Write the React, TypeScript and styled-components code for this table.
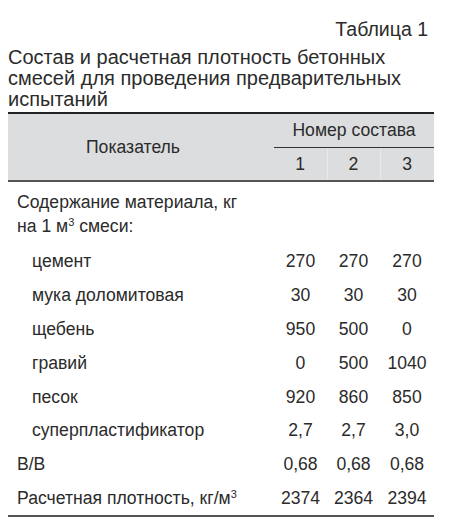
import React from 'react';
import styled, {createGlobalStyle} from 'styled-components';

const GlobalStyle = createGlobalStyle`
  body {
    margin: 0;
    background: #ffffff;
    font-family: "Liberation Sans", Arial, sans-serif;
    color: #2b2b2b;
  }
`;

const Sup = styled.sup`
  font-size: 11px;
  line-height: 0;
  vertical-align: 6px;
`;

type Row = {
    label: React.ReactNode;
    values: string[];
    indent?: boolean;
};

const rows: Row[] = [
    {label: 'цемент', values: ['270', '270', '270'], indent: true},
    {label: 'мука доломитовая', values: ['30', '30', '30'], indent: true},
    {label: 'щебень', values: ['950', '500', '0'], indent: true},
    {label: 'гравий', values: ['0', '500', '1040'], indent: true},
    {label: 'песок', values: ['920', '860', '850'], indent: true},
    {label: 'суперпластификатор', values: ['2,7', '2,7', '3,0'], indent: true},
    {label: 'В/В', values: ['0,68', '0,68', '0,68']},
    {label: <>Расчетная плотность, кг/м<Sup>3</Sup></>, values: ['2374', '2364', '2394']},
];

export default function App() {
    return (
        <>
            <GlobalStyle/>
            <Page>
                <Caption>Таблица 1</Caption>
                <Title>Состав и расчетная плотность бетонных смесей для проведения предварительных испытаний</Title>
                <Table>
                    <colgroup>
                        <col style={{width: 266}}/>
                        <col style={{width: 53}}/>
                        <col style={{width: 53}}/>
                        <col style={{width: 54}}/>
                    </colgroup>
                    <thead>
                    <tr>
                        <HeadCell rowSpan={2}>Показатель</HeadCell>
                        <GroupCell colSpan={3}>Номер состава</GroupCell>
                    </tr>
                    <tr>
                        <NumHead>1</NumHead>
                        <NumHead $sep>2</NumHead>
                        <NumHead $sep>3</NumHead>
                    </tr>
                    </thead>
                    <tbody>
                    <tr>
                        <GroupLabel colSpan={4}>
                            Содержание материала, кг<br/>на 1 м<Sup>3</Sup> смеси:
                        </GroupLabel>
                    </tr>
                    {rows.map((r, i) => (
                        <tr key={i}>
                            <Label $indent={r.indent}>{r.label}</Label>
                            {r.values.map((v, j) => <Value key={j}>{v}</Value>)}
                        </tr>
                    ))}
                    </tbody>
                </Table>
            </Page>
        </>
    );
}

const Page = styled.div`
  width: 426px;
  padding: 17px 0 0 8px;
`;

const Caption = styled.div`
  text-align: right;
  font-size: 19.5px;
  line-height: 24px;
  padding-right: 6px;
  margin-bottom: 6px;
`;

const Title = styled.div`
  font-size: 20px;
  line-height: 21px;
  padding-right: 30px;
  margin-bottom: 2px;
`;

const Table = styled.table`
  width: 426px;
  border-collapse: collapse;
  table-layout: fixed;
  font-size: 17.6px;
  border-top: 2px solid #222;
  border-bottom: 2px solid #555;

  td, th {
    padding: 0;
    font-weight: normal;
  }
`;

const HeadCell = styled.th`
  background: #dcdddf;
  text-align: center;
  vertical-align: middle;
  border-bottom: 2px solid #555;
  padding-right: 16px !important;
`;

const GroupCell = styled.th`
  background: #dcdddf;
  height: 33px;
  text-align: center;
  border-bottom: 1px solid #333;
`;

const NumHead = styled.th<{ $sep?: boolean }>`
  background: #dcdddf;
  height: 32px;
  text-align: center;
  border-bottom: 2px solid #555;
  border-left: ${p => p.$sep ? '1px solid #e8e9eb' : 'none'};
`;

const GroupLabel = styled.td`
  padding: 8px 0 7px 9px !important;
  line-height: 24px;
`;

const Label = styled.td<{ $indent?: boolean }>`
  height: 33.8px;
  padding-left: ${p => p.$indent ? '24px' : '9px'} !important;
  white-space: nowrap;
`;

const Value = styled.td`
  text-align: center;
`;
